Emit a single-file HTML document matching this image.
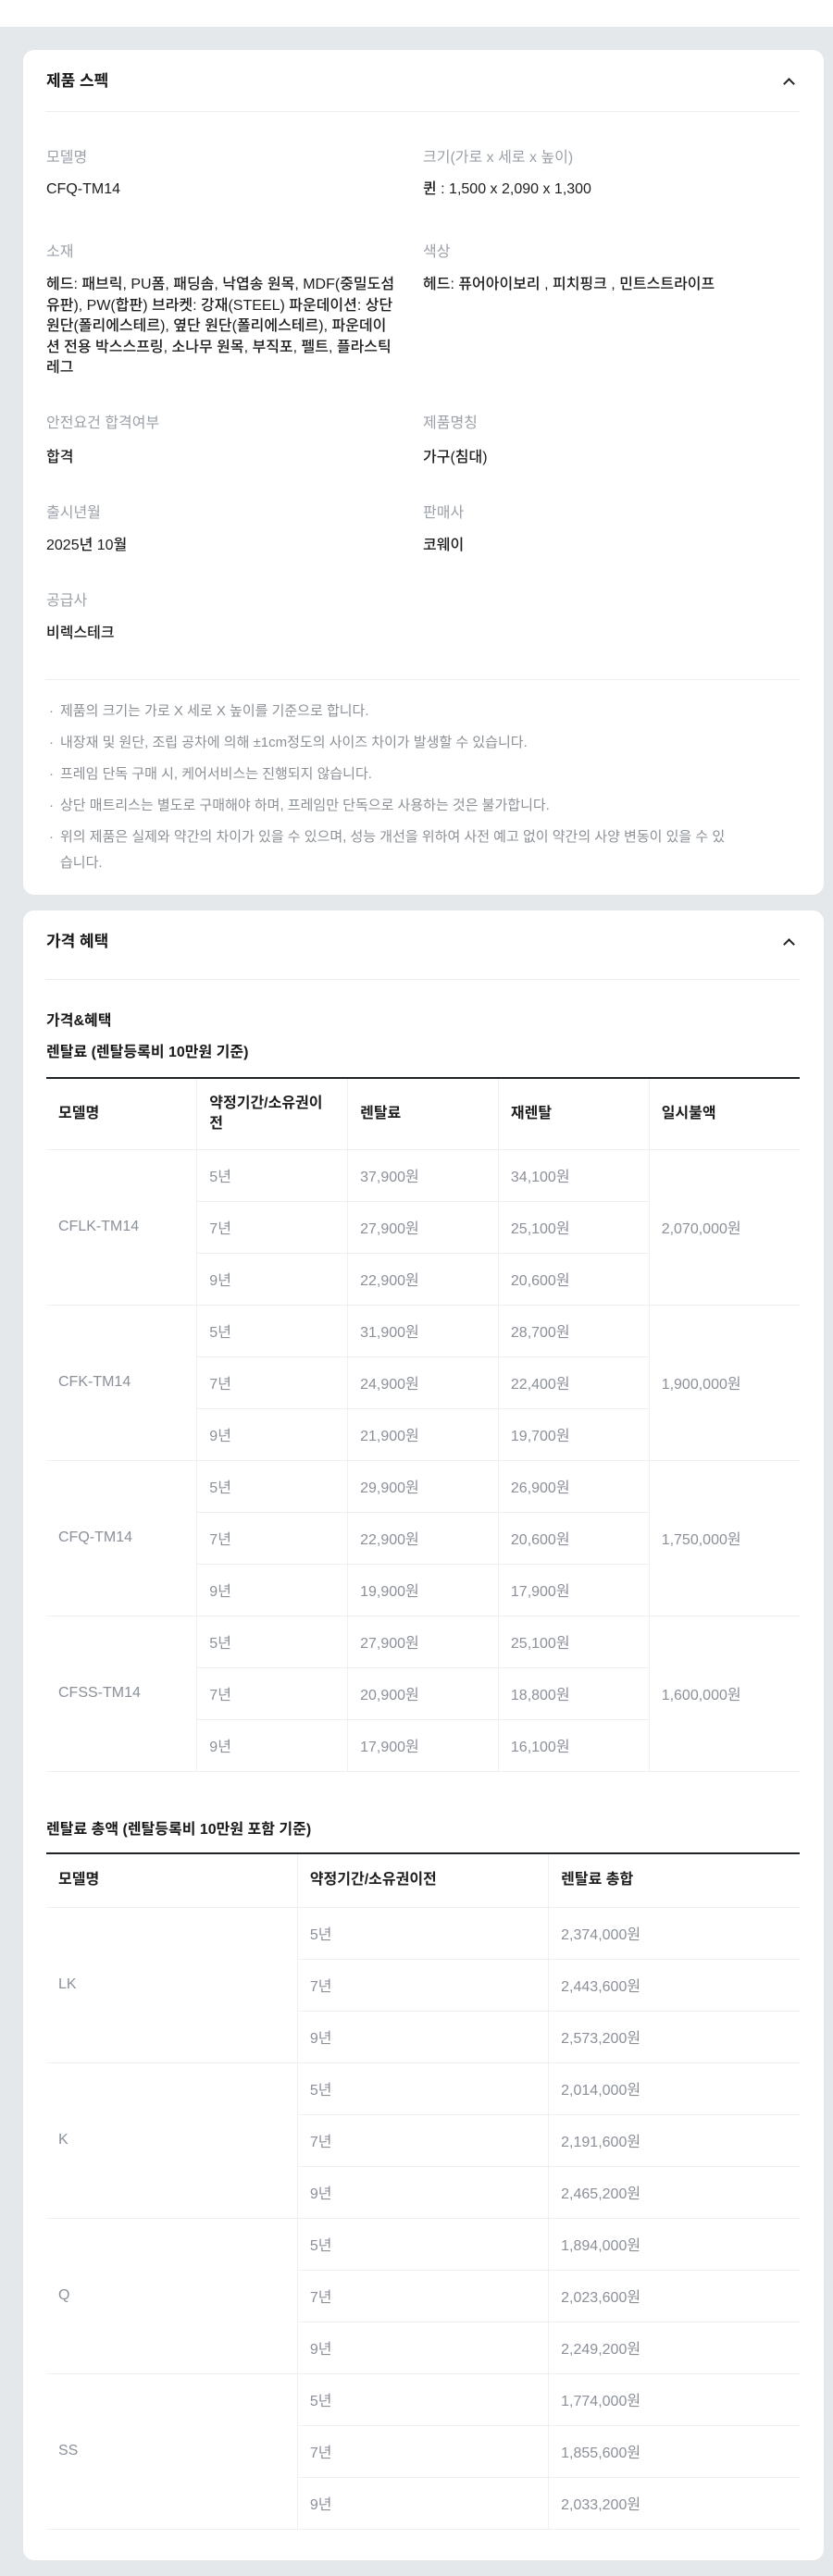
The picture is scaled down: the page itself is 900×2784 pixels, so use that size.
<!DOCTYPE html>
<html><head><meta charset="utf-8"><style>
*{margin:0;padding:0;box-sizing:border-box}
body{width:900px;height:2784px;background:#e5e8eb;font-family:"Liberation Sans","Noto Sans CJK KR",sans-serif;position:relative;overflow:hidden}
.top{position:absolute;left:0;top:0;width:900px;height:29px;background:#fff}
.card{position:absolute;left:25px;width:865px;background:#fff;border-radius:12px}
.a{position:absolute;white-space:nowrap}
.ttl{font-size:17px;font-weight:bold;color:#191919;line-height:24px}
.chev{position:absolute;width:9px;height:9px;border-left:2px solid #222;border-top:2px solid #222;transform:rotate(45deg)}
.hr{position:absolute;left:24px;width:815px;height:1px;background:#eceef0}
.lb{font-size:16px;color:#9ba1a8;line-height:22px}
.vl{font-size:16px;color:#1e1e1e;line-height:22px;font-weight:500}
.notes{position:absolute;left:24px;width:820px;font-size:15px;color:#8b9096;line-height:28px;white-space:nowrap}
.notes div{padding-left:16px;position:relative;margin-bottom:6px}
.notes div:before{content:"·";position:absolute;left:4px;top:0}
table{position:absolute;left:25px;width:814px;border-collapse:collapse;table-layout:fixed;font-size:16px}
th{font-weight:bold;color:#1e1e1e;text-align:left;padding:0 13px;line-height:22px;border-left:1px solid #eef0f2;border-bottom:1px solid #eef0f2}
td{color:#8b9099;padding:0 13px;height:56px;border-left:1px solid #eef0f2;border-bottom:1px solid #eef0f2}
tr>:first-child{border-left:none}
td.nb{border-left:1px solid #eef0f2}
</style></head><body>
<div class="top"></div>

<div class="card" style="top:54px;height:913px">
  <div class="a ttl" style="left:25px;top:22px">제품 스펙</div>
  <div class="chev" style="left:823px;top:32px"></div>
  <div class="hr" style="top:66px"></div>

  <div class="a lb" style="left:25px;top:106px">모델명</div>
  <div class="a vl" style="left:25px;top:140px">CFQ-TM14</div>
  <div class="a lb" style="left:432px;top:106px">크기(가로 x 세로 x 높이)</div>
  <div class="a vl" style="left:432px;top:140px">퀸 : 1,500 x 2,090 x 1,300</div>

  <div class="a lb" style="left:25px;top:208px">소재</div>
  <div class="a vl" style="left:25px;top:243px;line-height:22.5px">헤드: 패브릭, PU폼, 패딩솜, 낙엽송 원목, MDF(중밀도섬<br>유판), PW(합판) 브라켓: 강재(STEEL) 파운데이션: 상단<br>원단(폴리에스테르), 옆단 원단(폴리에스테르), 파운데이<br>션 전용 박스스프링, 소나무 원목, 부직포, 펠트, 플라스틱<br>레그</div>
  <div class="a lb" style="left:432px;top:208px">색상</div>
  <div class="a vl" style="left:432px;top:243px">헤드: 퓨어아이보리 , 피치핑크 , 민트스트라이프</div>

  <div class="a lb" style="left:25px;top:393px">안전요건 합격여부</div>
  <div class="a vl" style="left:25px;top:430px">합격</div>
  <div class="a lb" style="left:432px;top:393px">제품명칭</div>
  <div class="a vl" style="left:432px;top:430px">가구(침대)</div>

  <div class="a lb" style="left:25px;top:490px">출시년월</div>
  <div class="a vl" style="left:25px;top:525px">2025년 10월</div>
  <div class="a lb" style="left:432px;top:490px">판매사</div>
  <div class="a vl" style="left:432px;top:525px">코웨이</div>

  <div class="a lb" style="left:25px;top:585px">공급사</div>
  <div class="a vl" style="left:25px;top:620px">비렉스테크</div>

  <div class="hr" style="top:680px"></div>
  <div class="notes" style="top:701px">
    <div>제품의 크기는 가로 X 세로 X 높이를 기준으로 합니다.</div>
    <div>내장재 및 원단, 조립 공차에 의해 ±1cm정도의 사이즈 차이가 발생할 수 있습니다.</div>
    <div>프레임 단독 구매 시, 케어서비스는 진행되지 않습니다.</div>
    <div>상단 매트리스는 별도로 구매해야 하며, 프레임만 단독으로 사용하는 것은 불가합니다.</div>
    <div>위의 제품은 실제와 약간의 차이가 있을 수 있으며, 성능 개선을 위하여 사전 예고 없이 약간의 사양 변동이 있을 수 있<br>습니다.</div>
  </div>
</div>

<div class="card" style="top:984px;height:1783px">
  <div class="a ttl" style="left:25px;top:22px">가격 혜택</div>
  <div class="chev" style="left:823px;top:32px"></div>
  <div class="hr" style="top:74px"></div>
  <div class="a ttl" style="left:25px;top:108px;font-size:16px">가격&amp;혜택</div>
  <div class="a ttl" style="left:25px;top:142px;font-size:16px">렌탈료 (렌탈등록비 10만원 기준)</div>

  <table style="top:180px;border-top:2px solid #1e2328">
    <tr style="height:77px"><th>모델명</th><th>약정기간/소유권이전</th><th>렌탈료</th><th>재렌탈</th><th>일시불액</th></tr>
    <tr><td rowspan="3">CFLK-TM14</td><td>5년</td><td>37,900원</td><td>34,100원</td><td rowspan="3" class="nb">2,070,000원</td></tr>
    <tr><td class="nb">7년</td><td>27,900원</td><td>25,100원</td></tr>
    <tr><td class="nb">9년</td><td>22,900원</td><td>20,600원</td></tr>
    <tr><td rowspan="3">CFK-TM14</td><td>5년</td><td>31,900원</td><td>28,700원</td><td rowspan="3" class="nb">1,900,000원</td></tr>
    <tr><td class="nb">7년</td><td>24,900원</td><td>22,400원</td></tr>
    <tr><td class="nb">9년</td><td>21,900원</td><td>19,700원</td></tr>
    <tr><td rowspan="3">CFQ-TM14</td><td>5년</td><td>29,900원</td><td>26,900원</td><td rowspan="3" class="nb">1,750,000원</td></tr>
    <tr><td class="nb">7년</td><td>22,900원</td><td>20,600원</td></tr>
    <tr><td class="nb">9년</td><td>19,900원</td><td>17,900원</td></tr>
    <tr><td rowspan="3">CFSS-TM14</td><td>5년</td><td>27,900원</td><td>25,100원</td><td rowspan="3" class="nb">1,600,000원</td></tr>
    <tr><td class="nb">7년</td><td>20,900원</td><td>18,800원</td></tr>
    <tr><td class="nb">9년</td><td>17,900원</td><td>16,100원</td></tr>
  </table>

  <div class="a ttl" style="left:25px;top:982px;font-size:16px">렌탈료 총액 (렌탈등록비 10만원 포함 기준)</div>
  <table style="top:1018px;border-top:2px solid #1e2328">
    <tr style="height:58px"><th>모델명</th><th>약정기간/소유권이전</th><th>렌탈료 총합</th></tr>
    <tr><td rowspan="3">LK</td><td>5년</td><td>2,374,000원</td></tr>
    <tr><td class="nb">7년</td><td>2,443,600원</td></tr>
    <tr><td class="nb">9년</td><td>2,573,200원</td></tr>
    <tr><td rowspan="3">K</td><td>5년</td><td>2,014,000원</td></tr>
    <tr><td class="nb">7년</td><td>2,191,600원</td></tr>
    <tr><td class="nb">9년</td><td>2,465,200원</td></tr>
    <tr><td rowspan="3">Q</td><td>5년</td><td>1,894,000원</td></tr>
    <tr><td class="nb">7년</td><td>2,023,600원</td></tr>
    <tr><td class="nb">9년</td><td>2,249,200원</td></tr>
    <tr><td rowspan="3">SS</td><td>5년</td><td>1,774,000원</td></tr>
    <tr><td class="nb">7년</td><td>1,855,600원</td></tr>
    <tr><td class="nb">9년</td><td>2,033,200원</td></tr>
  </table>
</div>
</body></html>
